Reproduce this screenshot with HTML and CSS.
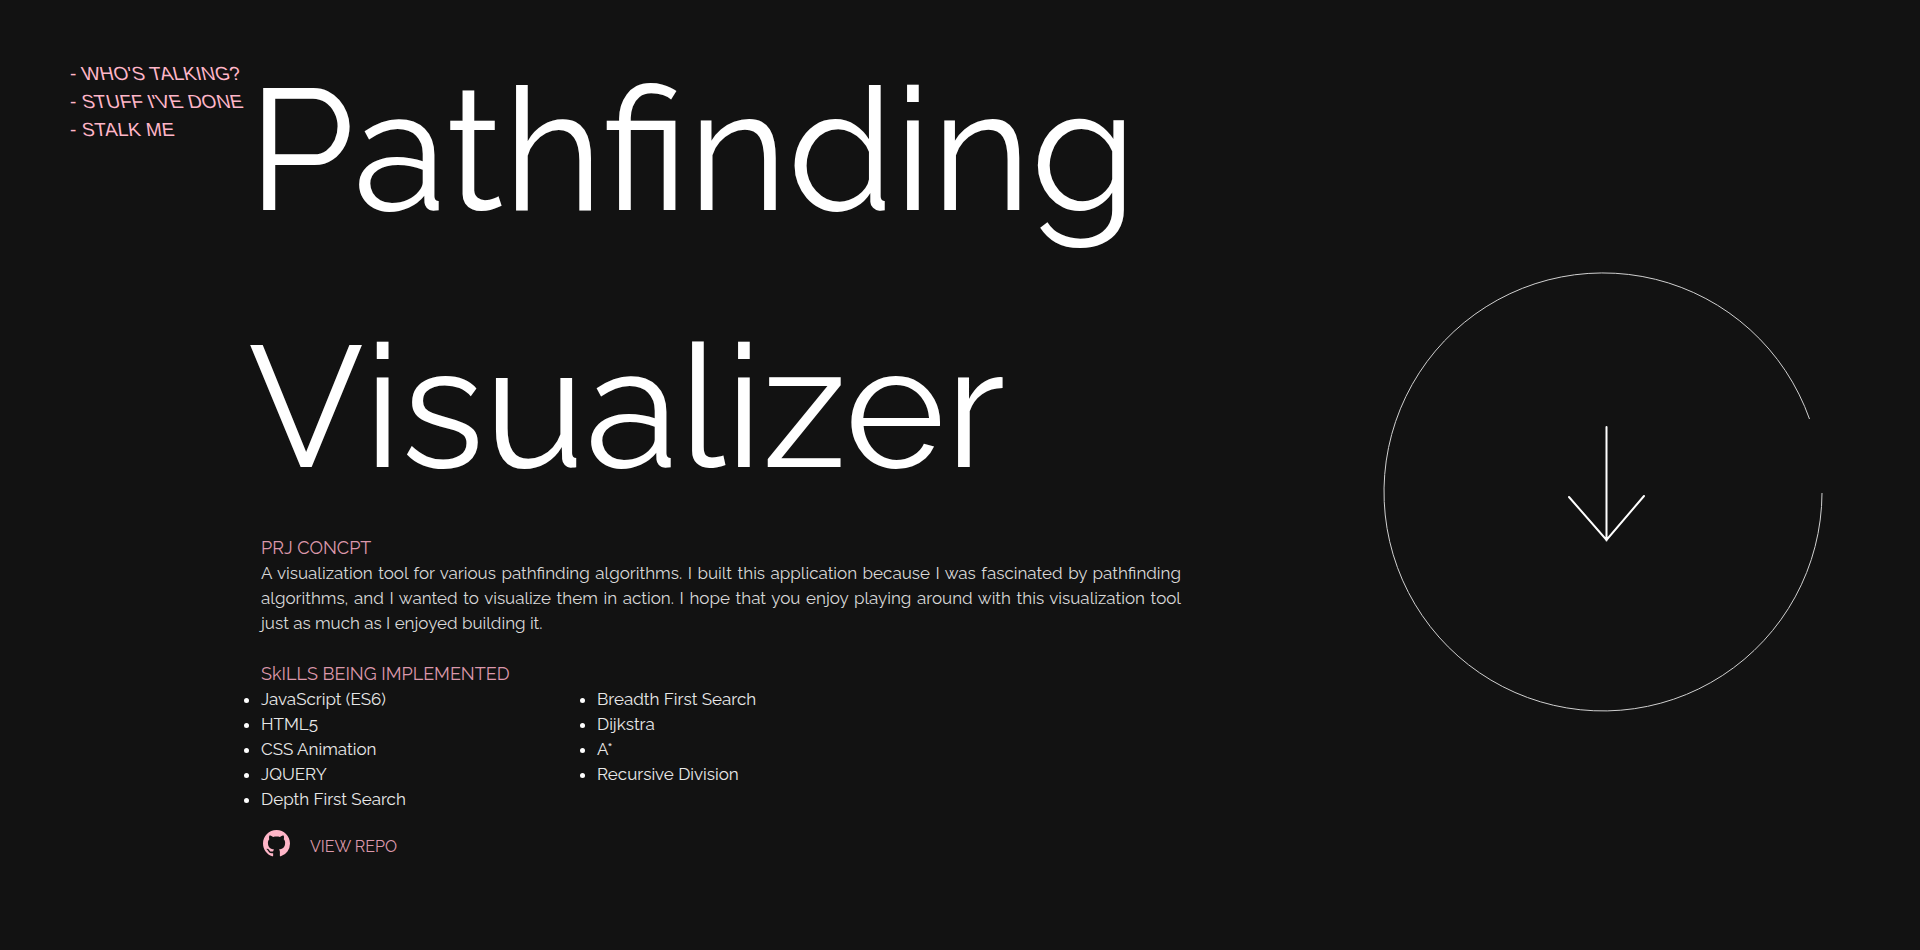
FILE: index.html
```html
<!DOCTYPE html>
<html lang="en">
<head>
<meta charset="utf-8">
<title>Pathfinding Visualizer</title>
<link rel="stylesheet" href="styles.css">
</head>
<body>
<div class="page">
  <nav class="menu" aria-label="Main">
    <a class="menu-link" href="#about">- <span class="slant">WHO'S</span> <span class="slant">TALKING?</span></a>
    <a class="menu-link" href="#work">- <span class="slant">STUFF</span> <span class="slant slant-strong">I'VE</span> <span class="slant">DONE</span></a>
    <a class="menu-link" href="#contact">- <span class="slant slant-light">STALK</span> <span class="slant slant-light">ME</span></a>
  </nav>
  <main class="project">
    <h1 class="title">Pathfinding<br>Visualizer</h1>
    <section class="block">
      <h2 class="label">PRJ CONCPT</h2>
      <p class="copy">A visualization tool for various pathfinding algorithms. I built this application because I was fascinated by pathfinding algorithms, and I wanted to visualize them in action. I hope that you enjoy playing around with this visualization tool just as much as I enjoyed building it.</p>
    </section>
    <section class="block">
      <h2 class="label">SkILLS BEING IMPLEMENTED</h2>
      <div class="skills">
        <ul class="list">
          <li>JavaScript (ES6)</li>
          <li>HTML5</li>
          <li>CSS Animation</li>
          <li>JQUERY</li>
          <li>Depth First Search</li>
        </ul>
        <ul class="list">
          <li>Breadth First Search</li>
          <li>Dijkstra</li>
          <li>A*</li>
          <li>Recursive Division</li>
        </ul>
      </div>
    </section>
    <a class="repo" href="#repo">
      <svg class="repo-icon" viewBox="0 0 16 16" aria-hidden="true"><path d="M8 0C3.58 0 0 3.58 0 8c0 3.54 2.29 6.53 5.47 7.59.4.07.55-.17.55-.38 0-.19-.01-.82-.01-1.49-2.01.37-2.53-.49-2.69-.94-.09-.23-.48-.94-.82-1.13-.28-.15-.68-.52-.01-.53.63-.01 1.08.58 1.23.82.72 1.21 1.87.87 2.33.66.07-.52.28-.87.51-1.07-1.78-.2-3.64-.89-3.64-3.95 0-.87.31-1.59.82-2.15-.08-.2-.36-1.02.08-2.12 0 0 .67-.21 2.2.82.64-.18 1.32-.27 2-.27s1.36.09 2 .27c1.53-1.04 2.2-.82 2.2-.82.44 1.1.16 1.92.08 2.12.51.56.82 1.27.82 2.15 0 3.07-1.87 3.75-3.65 3.95.29.25.54.73.54 1.48 0 1.07-.01 1.93-.01 2.2 0 .21.15.46.55.38A8.01 8.01 0 0 0 16 8c0-4.42-3.58-8-8-8z"/></svg>
      <span>VIEW REPO</span>
    </a>
  </main>
  <a class="scroll" href="#demo" aria-label="Scroll down">
    <svg class="scroll-art" viewBox="0 0 440 440" aria-hidden="true">
      <path class="ring" d="M439 220A219 219 0 1 1 426.500 146"/>
      <path class="arrow" d="M223.500 154V267.500M186 224L223.500 267L261 223"/>
    </svg>
  </a>
</div>
</body>
</html>
```
FILE: styles.css
```css
* { box-sizing: border-box; }
body {
  margin: 0;
  background: #121212;
  color: #fff;
  font: 17px/25px Raleway, Lato, sans-serif;
}
.page {
  display: grid;
  grid-template-columns: 191px minmax(0, 920px) 1fr;
  min-height: 100vh;
  padding: 0 97px 0 70px;
}
.menu {
  display: flex;
  flex-direction: column;
  padding-top: 60px;
  white-space: nowrap;
}
.menu-link {
  color: #ffb6c8;
  font: 19px/28px "Liberation Sans", Arial, sans-serif;
  text-decoration: none;
}
.slant { display: inline-block; transform: skewX(13deg); }
.slant-strong { transform: skewX(20deg); }
.slant-light { transform: skewX(7deg); }
.project { padding: 21px 0 48px; }
.title {
  margin: 0 0 0 -13px;
  font-size: 171px;
  line-height: 257px;
  font-weight: 400;
}
.block { margin-bottom: 25px; }
.block:last-of-type { margin-bottom: 18px; }
.label {
  margin: 0;
  color: #dc98ab;
  font-size: 18px;
  line-height: 26px;
  font-weight: 400;
}
.copy { margin: 0; color: #d8d8d8; text-align: justify; }
.skills { display: grid; grid-template-columns: 336px 1fr; }
.list { margin: 0; padding: 0; color: #e8e8e8; }
.list li::marker { color: #fff; }
.repo {
  display: inline-flex;
  align-items: flex-end;
  gap: 20px;
  padding-left: 2px;
  color: #dc98ab;
  font-size: 16px;
  text-decoration: none;
}
.repo-icon { width: 27px; height: 27px; margin-bottom: 2px; fill: #ffb6c8; }
.scroll { justify-self: end; align-self: start; padding-top: 273px; }
.scroll-art {
  display: block;
  width: 440px;
  height: 440px;
  overflow: visible;
  fill: none;
  stroke: #fff;
}
.ring { stroke: #d0d0d0; stroke-width: 1; }
.arrow { stroke-width: 2; stroke-linecap: round; }
```
